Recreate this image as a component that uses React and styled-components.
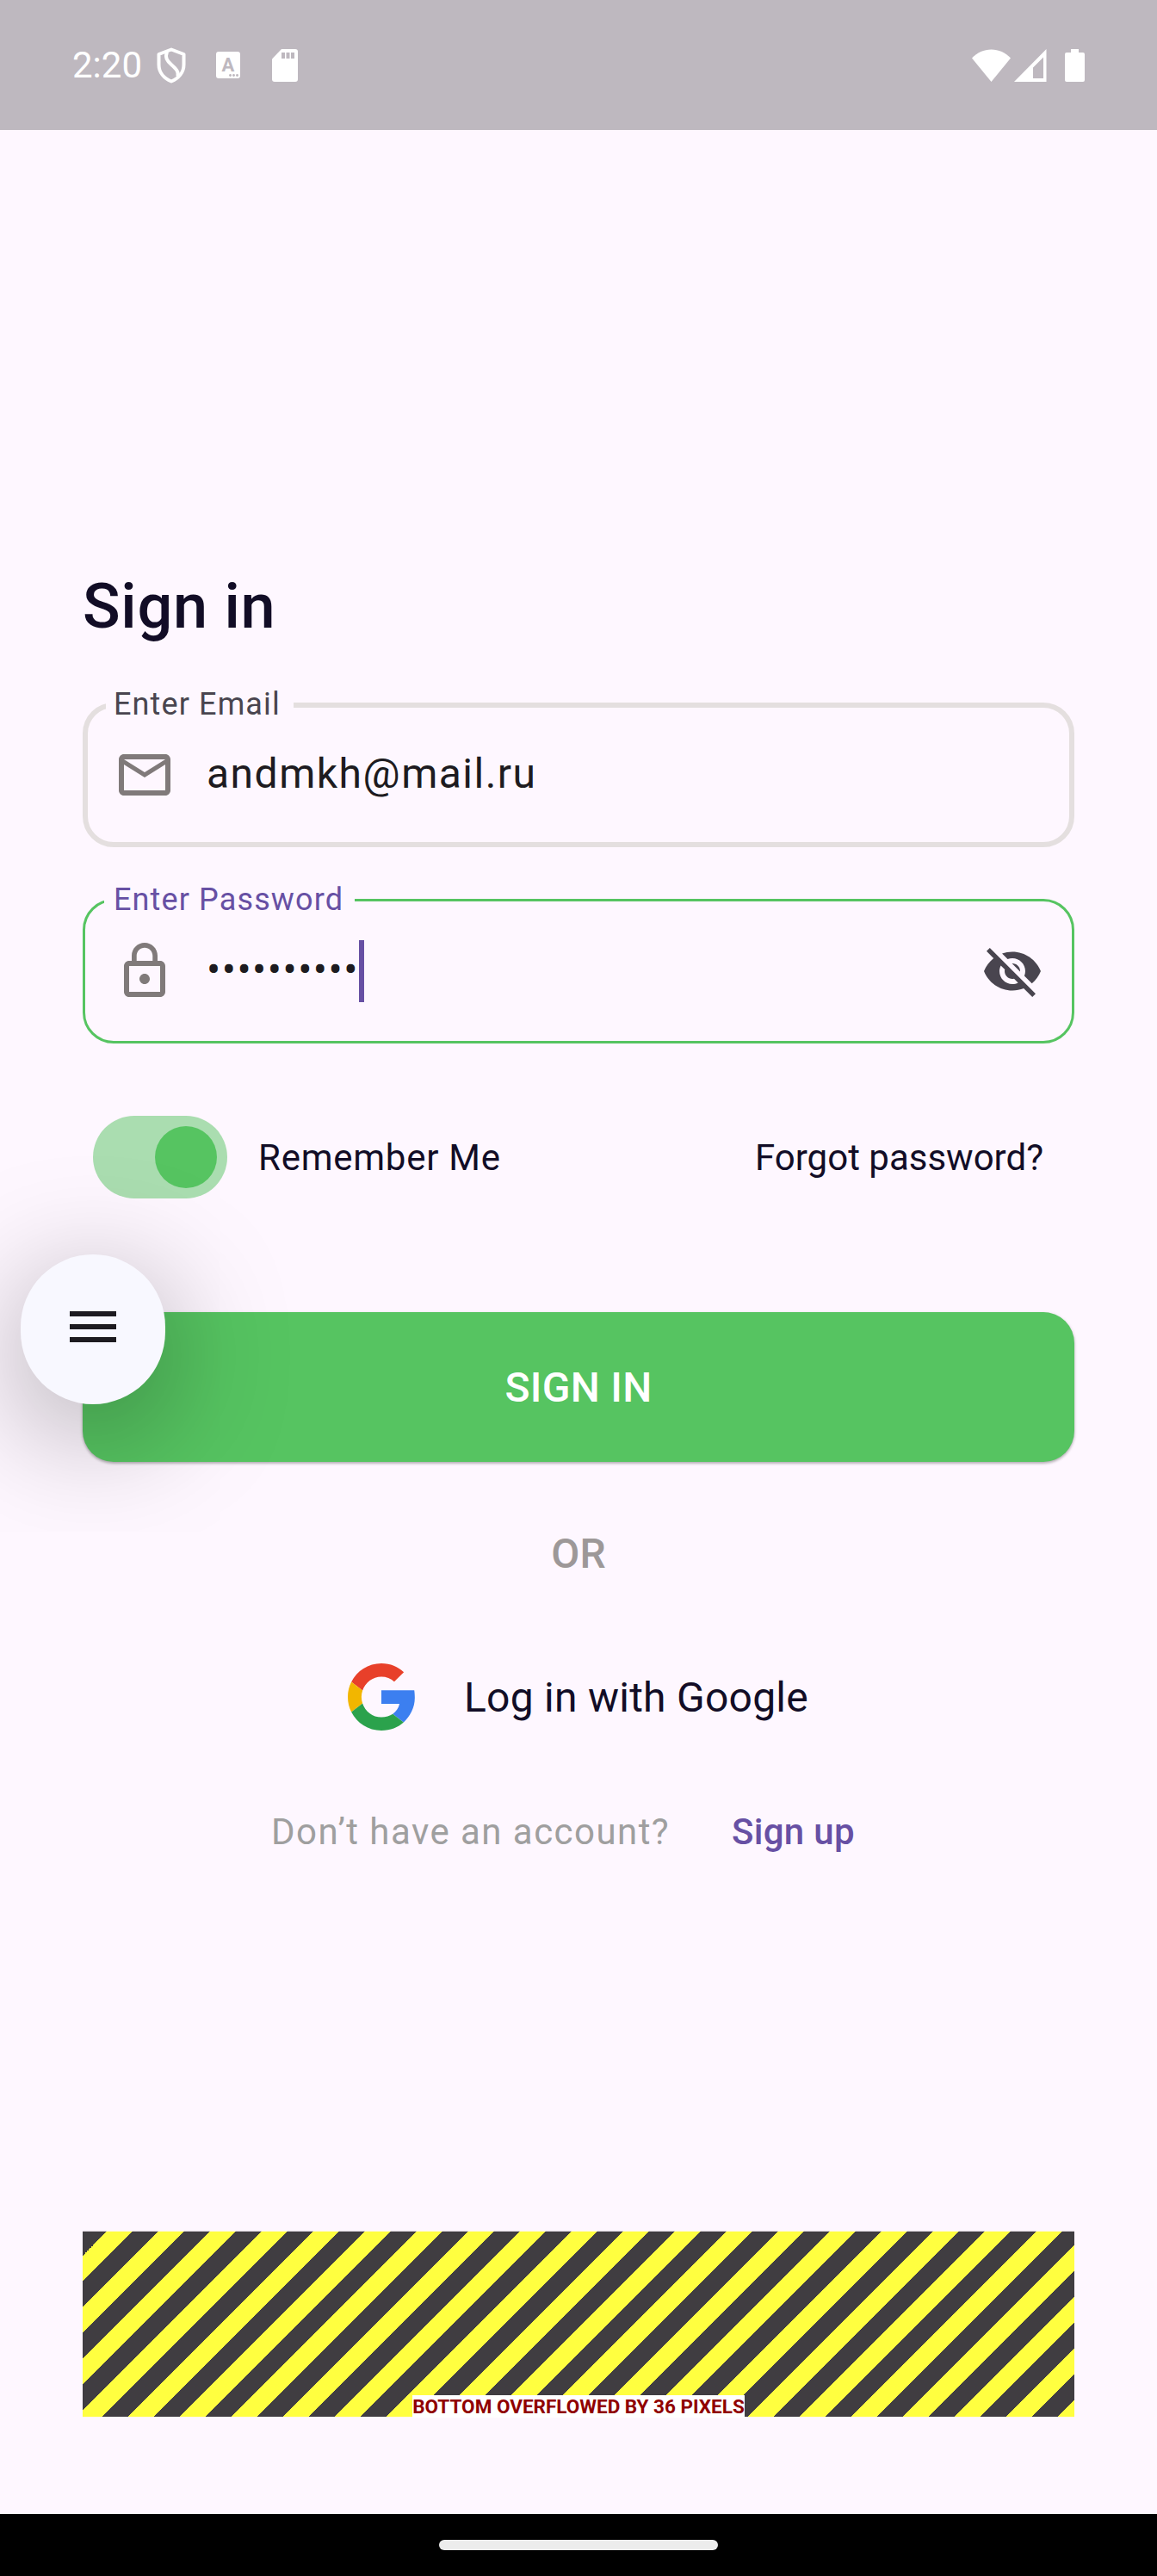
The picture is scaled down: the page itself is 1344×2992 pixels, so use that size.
import React from "react";
import styled, { createGlobalStyle } from "styled-components";

const Global = createGlobalStyle`
  *, *::before, *::after { box-sizing: border-box; }
  body { margin: 0; background: #fef7ff; font-family: Roboto, "Noto Sans", sans-serif; }
  button, a { font: inherit; color: inherit; text-decoration: none; }
`;

const Screen = styled.div`
  position: relative;
  display: flex;
  flex-direction: column;
  width: 1344px;
  height: 2992px;
  overflow: hidden;
  background: #fef7ff;
`;

const StatusBar = styled.header`
  display: flex;
  align-items: center;
  justify-content: space-between;
  height: 151px;
  padding: 0 84px;
  background: #beb8bf;
  color: #fff;
`;

const StatusGroup = styled.div`
  display: flex;
  align-items: center;
`;

const Clock = styled.span`
  font-size: 42px;
  line-height: 50px;
  width: 98px;
`;

const StatusIcon = styled.svg`
  display: block;
  flex: none;
  width: ${(p) => p.$w}px;
  height: ${(p) => p.$h}px;
  margin-left: ${(p) => p.$gap || 0}px;
`;

const BadgeLetter = styled.text`
  font-family: Roboto, sans-serif;
  font-size: 22px;
  font-weight: 700;
  fill: #beb8bf;
`;

const Content = styled.main`
  flex: 1;
  display: flex;
  flex-direction: column;
  padding: 511px 96px 113px;
`;

const Title = styled.h1`
  margin: 0;
  font-size: 72px;
  line-height: 86px;
  font-weight: 500;
  letter-spacing: 0.75px;
  color: #120d26;
`;

const Field = styled.fieldset`
  display: flex;
  align-items: center;
  height: ${(p) => p.$height}px;
  margin: ${(p) => p.$top}px 0 0;
  padding: ${(p) => p.$inset}px ${(p) => 36 - p.$stroke}px 0;
  border: ${(p) => p.$stroke}px solid ${(p) => p.$color};
  border-radius: 36px;
  min-width: 0;
`;

const Legend = styled.legend`
  height: 42px;
  width: ${(p) => p.$width}px;
  margin-left: ${(p) => p.$shift}px;
  padding: 0 0 0 ${(p) => p.$pad}px;
  font-size: 36px;
  line-height: ${(p) => p.$line}px;
  letter-spacing: 1.125px;
  white-space: nowrap;
  color: ${(p) => p.$color};
`;

const FieldIcon = styled.svg`
  flex: none;
  width: 72px;
  height: 72px;
  fill: ${(p) => p.$color};
`;

const Value = styled.span`
  flex: 1;
  display: flex;
  align-items: center;
  height: 72px;
  margin-left: 36px;
  font-size: 48px;
  line-height: 70px;
  letter-spacing: 1.5px;
  color: #1d1b20;
`;

const Glyphs = styled.span`
  height: 72px;
`;

const Caret = styled.span`
  width: 6px;
  height: 72px;
  background: #6750a4;
`;

const Options = styled.div`
  display: flex;
  align-items: center;
  height: 96px;
  margin-top: 84px;
  padding: 0 36px 0 12px;
  font-size: 42px;
  line-height: 50px;
  color: #120d26;
`;

const Switch = styled.span`
  display: flex;
  align-items: center;
  justify-content: flex-end;
  width: 156px;
  height: 96px;
  padding: 12px;
  border-radius: 48px;
  background: #aaddb0;
`;

const Thumb = styled.span`
  width: 72px;
  height: 72px;
  border-radius: 50%;
  background: #56c461;
`;

const Remember = styled.span`
  flex: 1;
  padding-top: 1px;
  margin-left: 36px;
  letter-spacing: 0.75px;
`;

const Forgot = styled.a`
  padding-top: 1px;
`;

const SignIn = styled.button`
  flex: none;
  height: 174px;
  margin: 132px 0 0;
  padding: 2px 0 0;
  border: 0;
  border-radius: 36px;
  background: #56c461;
  color: #fff;
  font-size: 48px;
  line-height: 58px;
  font-weight: 500;
  letter-spacing: 0.3px;
  box-shadow: 0 2px 3px rgba(0, 0, 0, 0.22), 0 1px 4px rgba(0, 0, 0, 0.12);
`;

const Divider = styled.div`
  margin-top: 78px;
  font-size: 48px;
  line-height: 58px;
  font-weight: 500;
  text-align: center;
  color: #9d9898;
`;

const Google = styled.div`
  display: flex;
  align-items: center;
  height: 78px;
  margin-top: 98px;
  padding-left: 308px;
  gap: 57px;
  font-size: 48px;
  line-height: 58px;
  letter-spacing: 0.25px;
  color: #120d26;

  svg { width: 78px; height: 78px; }
  span { padding-top: 2px; }
`;

const Footer = styled.div`
  display: flex;
  margin-top: 93px;
  padding-left: 219px;
  font-size: 42px;
  line-height: 50px;
`;

const Hint = styled.span`
  width: 535px;
  letter-spacing: 1.45px;
  color: #9f9f9f;
`;

const SignUp = styled.a`
  font-weight: 500;
  letter-spacing: 0.3px;
  color: #6750a4;
`;

const Overflow = styled.div`
  display: flex;
  align-items: flex-end;
  justify-content: center;
  height: 216px;
  margin-top: auto;
  background:
    linear-gradient(rgba(254, 247, 255, 0.75), rgba(254, 247, 255, 0.75)) top / 100% 1px no-repeat,
    repeating-linear-gradient(
      135deg,
      #403d41 0, #403d41 20.506px,
      #ffff40 20.506px, #ffff40 41.719px,
      #403d41 41.719px, #403d41 42.426px
    );
`;

const OverflowLabel = styled.span`
  height: 26px;
  margin-bottom: -1px;
  background: #fff;
  color: #900000;
  font-size: 22.5px;
  line-height: 26px;
  font-weight: 700;
  white-space: nowrap;
`;

const NavBar = styled.footer`
  display: flex;
  align-items: center;
  justify-content: center;
  height: 72px;
  background: #000;
`;

const Pill = styled.span`
  width: 324px;
  height: 12px;
  border-radius: 6px;
  background: #ececec;
`;

const MenuButton = styled.button`
  position: absolute;
  left: 24px;
  top: 1457px;
  display: flex;
  justify-content: center;
  width: 168px;
  height: 174px;
  padding: 48px 0 0;
  border: 0;
  border-radius: 84px;
  background: #f8f8ff;
  box-shadow: 0 30px 144px rgba(0, 0, 0, 0.36);

  svg { width: 72px; height: 72px; fill: #1d1b20; }
`;

const GoogleLogo = () => (
  <svg viewBox="0 0 48 48" preserveAspectRatio="none">
    <path fill="#e8402a" d="M24 9.5c3.54 0 6.71 1.22 9.21 3.6l6.85-6.85C35.9 2.38 30.47 0 24 0 14.62 0 6.51 5.38 2.56 13.22l7.98 6.19C12.43 13.72 17.74 9.5 24 9.5z" />
    <path fill="#3c7ff0" d="M47.9 24.55c0-1.57-.15-3.69-.38-5.25H24v9.62h12.94c-.58 2.96-2.26 5.48-4.78 7.18l7.73 6c4.51-4.18 8.01-10.36 8.01-17.55z" />
    <path fill="#f2b600" d="M10.53 28.59c-.48-1.45-.76-2.99-.76-4.59s.27-3.14.76-4.59l-7.98-6.19C.92 16.46 0 20.12 0 24c0 3.88.92 7.54 2.56 10.78l7.97-6.19z" />
    <path fill="#2ba24c" d="M24 48c6.48 0 11.93-2.13 15.89-5.81l-7.73-6c-2.15 1.45-4.92 2.3-8.16 2.3-6.26 0-11.57-4.22-13.47-9.91l-7.98 6.19C6.51 42.62 14.62 48 24 48z" />
  </svg>
);

export default function App() {
  return (
    <Screen>
      <Global />
      <StatusBar>
        <StatusGroup>
          <Clock>2:20</Clock>
          <StatusIcon $w={34} $h={42} viewBox="0 0 34 42" fill="none" stroke="#fff" strokeWidth="4" strokeLinejoin="round">
            <path d="M17 2.500 31.500 8v12c0 9-6 16-14.500 19.500C8.500 36 2.500 29 2.500 20V8z" />
            <path d="M12 5C9.500 12 12 15.500 17 20S26 28 24.500 34" />
          </StatusIcon>
          <StatusIcon $w={28} $h={31} $gap={35} viewBox="0 0 28 31">
            <rect width="28" height="31" rx="3" fill="#fff" />
            <BadgeLetter x="14" y="22.500" textAnchor="middle">A</BadgeLetter>
            <g fill="#beb8bf">
              <circle cx="16.500" cy="27.500" r="1.400" />
              <circle cx="20.500" cy="27.500" r="1.400" />
              <circle cx="24.500" cy="27.500" r="1.400" />
            </g>
          </StatusIcon>
          <StatusIcon $w={30} $h={38} $gap={37} viewBox="0 0 30 38">
            <path fill="#fff" d="M11 0H27a3 3 0 0 1 3 3v32a3 3 0 0 1-3 3H3a3 3 0 0 1-3-3V11.500z" />
            <path fill="#beb8bf" d="M11 4h4v7h-4zM16.500 4h4v7h-4zM22 4h4v7h-4z" />
          </StatusIcon>
        </StatusGroup>
        <StatusGroup>
          <StatusIcon $w={45} $h={38} viewBox="0 0 45 38" fill="#fff">
            <path d="M0 10.500C6 4 14 .5 22.500.5S39 4 45 10.500L22.500 38z" />
          </StatusIcon>
          <StatusIcon $w={38} $h={38} $gap={4} viewBox="0 0 38 38" fill="#fff" fillRule="evenodd">
            <path d="M37.500 0v38H0zM34 9.500 22 21.500V34h12z" />
          </StatusIcon>
          <StatusIcon $w={23} $h={38} $gap={21} viewBox="0 0 23 38" fill="#fff">
            <path d="M7 0h9v4h5a2 2 0 0 1 2 2v30a2 2 0 0 1-2 2H2a2 2 0 0 1-2-2V6a2 2 0 0 1 2-2h5z" />
          </StatusIcon>
        </StatusGroup>
      </StatusBar>

      <Content>
        <Title>Sign in</Title>
        <Field $height={186} $top={50} $inset={24} $stroke={6} $color="#e4dfdf">
          <Legend $width={218} $shift={-9} $pad={9} $line={40} $color="#49454f">Enter Email</Legend>
          <FieldIcon viewBox="0 0 24 24" $color="#807a7a">
            <path d="M22 6c0-1.100-.9-2-2-2H4c-1.100 0-2 .9-2 2v12c0 1.100.9 2 2 2h16c1.100 0 2-.9 2-2V6zm-2 0-8 5-8-5h16zm0 12H4V8l8 5 8-5v10z" />
          </FieldIcon>
          <Value><Glyphs>andmkh@mail.ru</Glyphs></Value>
        </Field>
        <Field $height={188} $top={40} $inset={26} $stroke={3} $color="#56c461">
          <Legend $width={291} $shift={-11} $pad={11} $line={42} $color="#6750a4">Enter Password</Legend>
          <FieldIcon viewBox="0 0 24 24" $color="#807a7a">
            <path d="M12 17c1.100 0 2-.9 2-2s-.9-2-2-2-2 .9-2 2 .9 2 2 2zm6-9h-1V6c0-2.760-2.240-5-5-5S7 3.240 7 6v2H6c-1.100 0-2 .9-2 2v10c0 1.100.9 2 2 2h12c1.100 0 2-.9 2-2V10c0-1.100-.9-2-2-2zM8.900 6c0-1.710 1.390-3.100 3.100-3.100s3.100 1.390 3.100 3.100v2H8.900V6zM18 20H6V10h12v10z" />
          </FieldIcon>
          <Value><Glyphs>••••••••••</Glyphs><Caret /></Value>
          <FieldIcon viewBox="0 0 24 24" $color="#49454f">
            <path d="M12 7c2.760 0 5 2.240 5 5 0 .65-.13 1.260-.36 1.830l2.920 2.920c1.510-1.260 2.700-2.890 3.430-4.750-1.730-4.390-6-7.500-11-7.500-1.400 0-2.740.25-3.980.7l2.160 2.160C10.740 7.130 11.350 7 12 7zM2 4.270l2.280 2.280.46.46C3.080 8.300 1.780 10.020 1 12c1.730 4.390 6 7.500 11 7.500 1.550 0 3.030-.3 4.380-.84l.42.42L19.730 22 21 20.730 3.270 3 2 4.270zM7.530 9.800l1.550 1.550c-.05.21-.08.43-.08.65 0 1.660 1.340 3 3 3 .22 0 .44-.03.65-.08l1.550 1.550c-.67.33-1.410.53-2.200.53-2.760 0-5-2.240-5-5 0-.79.2-1.530.53-2.200zm4.310-.78 3.150 3.150.02-.16c0-1.660-1.340-3-3-3l-.17.01z" />
          </FieldIcon>
        </Field>

        <Options>
          <Switch><Thumb /></Switch>
          <Remember>Remember Me</Remember>
          <Forgot>Forgot password?</Forgot>
        </Options>

        <SignIn>SIGN IN</SignIn>
        <Divider>OR</Divider>
        <Google>
          <GoogleLogo />
          <span>Log in with Google</span>
        </Google>
        <Footer>
          <Hint>Don’t have an account?</Hint>
          <SignUp>Sign up</SignUp>
        </Footer>

        <Overflow>
          <OverflowLabel>BOTTOM OVERFLOWED BY 36 PIXELS</OverflowLabel>
        </Overflow>
      </Content>

      <NavBar><Pill /></NavBar>

      <MenuButton>
        <svg viewBox="0 0 24 24"><path d="M3 18h18v-2H3v2zm0-5h18v-2H3v2zm0-7v2h18V6H3z" /></svg>
      </MenuButton>
    </Screen>
  );
}
